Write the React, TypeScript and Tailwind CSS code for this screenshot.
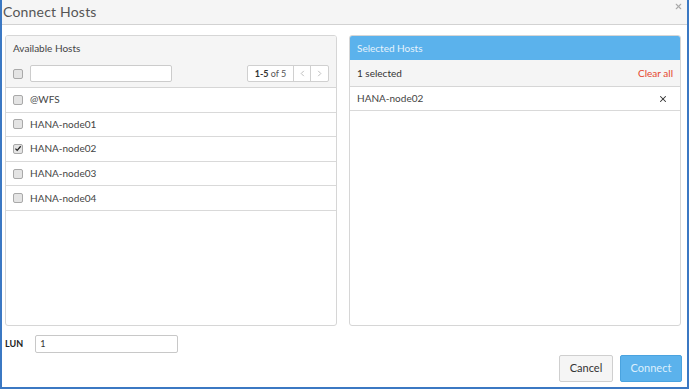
import { X } from 'lucide-react';

const hosts = ['@WFS', 'HANA-node01', 'HANA-node02', 'HANA-node03', 'HANA-node04'];

const Check = ({ checked }: { checked?: boolean }) => (
  <span className="w-[10px] h-[10px] rounded-[2px] border border-[#a9a9a9] bg-[#e4e4e4] flex items-center justify-center shrink-0">
    {checked && (
      <svg viewBox="0 0 10 10" className="w-[9px] h-[9px]">
        <path d="M1.8 5.2 L4 7.4 L8.4 2.2" fill="none" stroke="#222" strokeWidth="1.6" />
      </svg>
    )}
  </span>
);

const App = () => {
  return (
    <div
      className="w-[689px] h-[389px] bg-white border-x-2 border-b-2 border-[#3b78c3] flex flex-col text-[10px] text-[#333]"
      style={{ fontFamily: 'Lato, "Open Sans", sans-serif' }}
    >
      {/* Header */}
      <div className="h-[25px] shrink-0 bg-[#f5f5f5] border-b border-[#d2d2d2] flex items-center justify-between pl-[1px] pr-[4px]">
        <h1 className="text-[14px] text-[#555] leading-none tracking-[0.2px]">Connect Hosts</h1>
        <X className="w-[9px] h-[9px] text-[#aaa] -mt-[12px]" strokeWidth={3} />
      </div>

      {/* Panels */}
      <div className="flex gap-[12px] pl-[3px] pr-[4px] pt-[10px] h-[302px] shrink-0">
        <div className="w-[332px] h-[291px] border border-[#d6d6d6] rounded-[3px] flex flex-col overflow-hidden">
          <div className="bg-[#f5f5f5] border-b border-[#d6d6d6] h-[52px] shrink-0 flex flex-col px-[7px]">
            <div className="h-[24px] flex items-center text-[#444]">Available Hosts</div>
            <div className="flex items-center justify-between pt-[5px]">
              <div className="flex items-center gap-[7px]">
                <Check />
                <div className="w-[142px] h-[17px] bg-white border border-[#ccc] rounded-[2px]" />
              </div>
              <div className="flex h-[17px] border border-[#d0d0d0] bg-white rounded-[2px] text-[9px]">
                <div className="w-[46px] flex items-center justify-center border-r border-[#d0d0d0] text-[#555]">
                  <span className="font-bold text-[#333]">1-5</span>&nbsp;of 5
                </div>
                <div className="w-[17px] flex items-center justify-center border-r border-[#d0d0d0]">
                  <svg viewBox="0 0 8 8" className="w-[7px] h-[7px]"><path d="M5.5 1 L2.5 4 L5.5 7" fill="none" stroke="#b5b5b5" strokeWidth="1" /></svg>
                </div>
                <div className="w-[17px] flex items-center justify-center">
                  <svg viewBox="0 0 8 8" className="w-[7px] h-[7px]"><path d="M2.5 1 L5.5 4 L2.5 7" fill="none" stroke="#b5b5b5" strokeWidth="1" /></svg>
                </div>
              </div>
            </div>
          </div>
          {hosts.map((h) => (
            <div key={h} className="h-[24.6px] shrink-0 border-b border-[#d9d9d9] flex items-center gap-[7px] px-[7px] text-[#444]">
              <Check checked={h === 'HANA-node02'} />
              <span>{h}</span>
            </div>
          ))}
        </div>

        <div className="w-[332px] h-[291px] border border-[#d6d6d6] rounded-[3px] flex flex-col overflow-hidden">
          <div className="h-[24px] shrink-0 bg-[#5bb2ec] flex items-center px-[7px] text-[#e6f3fc]">Selected Hosts</div>
          <div className="h-[27px] shrink-0 bg-[#f5f5f5] border-b border-[#d6d6d6] flex items-center justify-between px-[7px]">
            <span className="text-[#333]">1 selected</span>
            <span className="text-[#e5452d]">Clear all</span>
          </div>
          <div className="h-[24px] shrink-0 border-b border-[#d9d9d9] flex items-center justify-between pl-[7px] pr-[12px] text-[#444]">
            <span>HANA-node02</span>
            <X className="w-[10px] h-[10px] text-[#333]" strokeWidth={2.5} />
          </div>
        </div>
      </div>

      {/* LUN */}
      <div className="flex items-center gap-[12px] pl-[3px] mt-[8px]">
        <span className="font-bold text-[9px] text-[#222]">LUN</span>
        <div className="w-[143px] h-[18px] border border-[#c8c8c8] rounded-[2px] flex items-center px-[4px] text-[9px] text-[#333]">1</div>
      </div>

      {/* Footer */}
      <div className="flex justify-end gap-[7px] pr-[5px] mt-[2px]">
        <button className="w-[54px] h-[27px] bg-[#f5f5f5] border border-[#cfcfcf] rounded-[2px] text-[11px] text-[#333]">Cancel</button>
        <button className="w-[62px] h-[27px] bg-[#5bb2ec] border border-[#4aa3df] rounded-[2px] text-[11px] text-[#dceffc]">Connect</button>
      </div>
    </div>
  );
};

export default App;
